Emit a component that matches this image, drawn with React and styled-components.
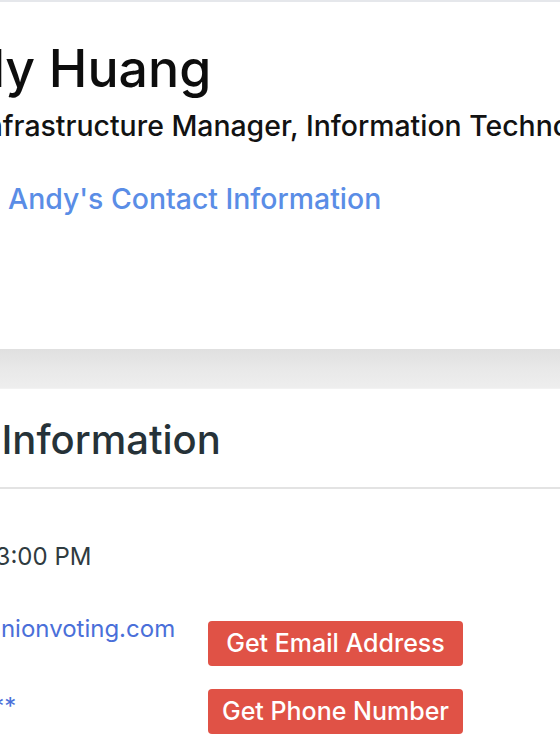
import React from "react";
import styled, { createGlobalStyle } from "styled-components";

const GlobalStyle = createGlobalStyle`
  html, body { margin: 0; padding: 0; background: #ffffff; }
  body { font-family: "Inter", "Noto Sans", sans-serif; -webkit-font-smoothing: antialiased; }
  * { box-sizing: border-box; }
`;

const Viewport = styled.div`
  width: 560px;
  height: 747px;
  overflow: hidden;
  background: #ffffff;
`;

const ProfileCard = styled.section`
  border-top: 2px solid #e5e7eb;
  background: #ffffff;
  padding: 35px 0 131px;
  margin-left: -22px;
  white-space: nowrap;
`;

const Name = styled.h1`
  margin: 0 0 0 -73px;
  font-size: 51.8px;
  line-height: 63px;
  font-weight: 500;
  color: #0d0d0d;
`;

const Title = styled.p`
  margin: 7px 0 0;
  font-size: 28.4px;
  line-height: 37.4px;
  font-weight: 500;
  color: #121212;
`;

const ContactLink = styled.a`
  display: block;
  margin: 36px 0 0 30px;
  font-size: 28.4px;
  line-height: 37.4px;
  font-weight: 500;
  color: #5a8de6;
  text-decoration: none;
`;

const Divider = styled.div`
  height: 40px;
  background: linear-gradient(180deg, #e0e0e0 0%, #e9e9e9 55%, #eeeeee 100%);
  border-bottom: 1px solid #f2f2f2;
`;

const InfoCard = styled.section`
  background: #ffffff;
  white-space: nowrap;
`;

const InfoHeader = styled.div`
  padding: 27px 0 22px;
  border-bottom: 2px solid #e3e3e3;
`;

const InfoHeading = styled.h2`
  margin: 0 0 0 -160px;
  font-size: 40px;
  line-height: 48.7px;
  font-weight: 500;
  color: #263238;
`;

const Rows = styled.div`
  display: flex;
  flex-direction: column;
  margin-left: -126px;
`;

const Row = styled.div`
  display: grid;
  grid-template-columns: 334px 255px;
  align-items: start;
  margin-top: ${(p) => p.$mt}px;
`;

const Value = styled.span`
  display: block;
  font-size: 24px;
  line-height: 24px;
  margin-top: ${(p) => p.$shift || 0}px;
  color: ${(p) => (p.$link ? "#4a6fd9" : "#2f3b40")};
`;

const ActionButton = styled.button`
  width: 255px;
  height: 45px;
  padding: 0;
  border: none;
  border-radius: 4px;
  background: #e05246;
  color: #ffffff;
  font-family: "Inter", "Noto Sans", sans-serif;
  font-size: 25px;
  font-weight: 500;
  line-height: 45px;
  text-align: center;
  cursor: pointer;
`;

export default function App() {
  return (
    <>
      <GlobalStyle />
      <Viewport>
        <ProfileCard>
          <Name>Andy Huang</Name>
          <Title>Infrastructure Manager, Information Technology</Title>
          <ContactLink href="#contact">Andy's Contact Information</ContactLink>
        </ProfileCard>
        <Divider />
        <InfoCard id="contact">
          <InfoHeader>
            <InfoHeading>Contact Information</InfoHeading>
          </InfoHeader>
          <Rows>
            <Row $mt={56}>
              <Value>9:00 AM - 3:00 PM</Value>
            </Row>
            <Row $mt={52}>
              <Value $link $shift={-4}>****@dominionvoting.com</Value>
              <ActionButton>Get Email Address</ActionButton>
            </Row>
            <Row $mt={23}>
              <Value $link $shift={6}>***-***-****</Value>
              <ActionButton>Get Phone Number</ActionButton>
            </Row>
          </Rows>
        </InfoCard>
      </Viewport>
    </>
  );
}
